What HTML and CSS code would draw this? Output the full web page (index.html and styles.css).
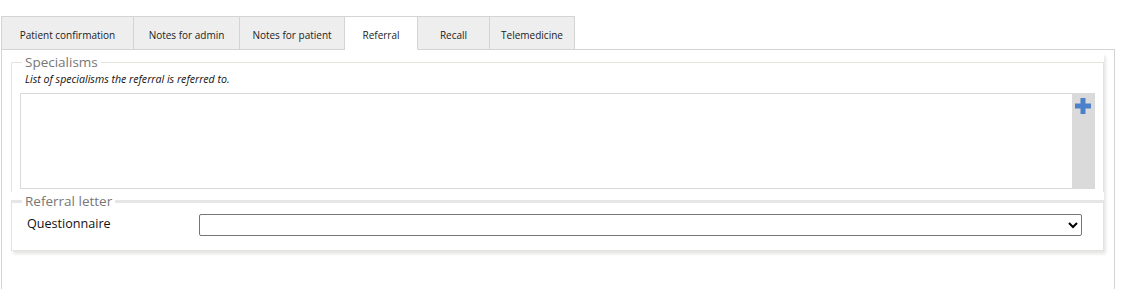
FILE: index.html
```html
<!DOCTYPE html>
<html lang="en">
<head>
  <meta charset="UTF-8">
  <title>Referral</title>
  <link rel="stylesheet" href="styles.css">
</head>
<body>
  <div class="tabs">
    <div class="tab t-confirm">Patient confirmation</div>
    <div class="tab t-admin">Notes for admin</div>
    <div class="tab t-patient">Notes for patient</div>
    <div class="tab t-referral active">Referral</div>
    <div class="tab t-recall">Recall</div>
    <div class="tab t-tele">Telemedicine</div>
  </div>

  <div class="panel">
    <div class="group">
      <fieldset class="sect sect-spec">
        <legend>Specialisms</legend>
        <p class="hint">List of specialisms the referral is referred to.</p>
        <div class="listbox">
          <div class="list-body"></div>
          <div class="list-side">
            <svg class="add-icon" width="16" height="16" viewBox="0 0 16 16">
              <rect x="5.5" y="0" width="5" height="16" fill="#4d80cb"/>
              <rect x="0" y="5.5" width="16" height="5" fill="#4d80cb"/>
            </svg>
          </div>
        </div>
      </fieldset>
      <fieldset class="sect sect-letter">
        <legend>Referral letter</legend>
        <div class="row">
          <label for="questionnaire">Questionnaire</label>
          <select id="questionnaire"><option></option></select>
        </div>
      </fieldset>
    </div>
  </div>
</body>
</html>
```

FILE: styles.css
```css
*, *::before, *::after { box-sizing: border-box; }
body { margin: 0; padding: 16px 0 0 1px; font-family: "Open Sans", Arial, sans-serif; background: #fff; color: #222; }

.tabs { display: flex; height: 34px; }
.tab { display: flex; align-items: center; justify-content: center; padding-top: 3px; background: #eeeeee; border: 1px solid #d4d4d4; border-left: none; font-size: 10px; color: #222; }
.tab:first-child { border-left: 1px solid #d4d4d4; }
.tab.active { background: #fff; border-bottom-color: #fff; position: relative; z-index: 1; }
.t-confirm { width: 133px; }
.t-admin { width: 106px; }
.t-patient { width: 105px; }
.t-referral { width: 73px; }
.t-recall { width: 72px; }
.t-tele { width: 85px; }

.panel { width: 1114px; min-height: 260px; margin-top: -1px; border: 1px solid #d4d4d4; padding: 3px 10px 0 9px; }

.group { box-shadow: 2px 3px 3px rgba(0,0,0,0.10); }
.sect { margin: 0; padding: 0 8px 3px; border: 1px solid #e4e4de; min-width: 0; }
.sect legend { margin-left: 2px; padding: 0 3px; font-size: 13.5px; color: #777; line-height: 18px; }
.sect-spec { border-bottom: none; }
.sect-letter { border-top: 3px solid #e6e6e6; padding-bottom: 14px; }

.hint { margin: 1px 0 7px 5px; font-size: 10.6px; font-style: italic; color: #111; line-height: 14px; }

.listbox { display: flex; height: 96px; border: 1px solid #d9d9d9; }
.list-body { flex: 1; background: #fff; }
.list-side { width: 22px; background: #dadada; display: flex; justify-content: center; padding-top: 4px; }

.row { display: flex; align-items: center; padding: 4px 13px 0 7px; }
.row label { width: 172px; font-size: 12.6px; color: #111; margin-top: -4px; }
.row select { flex: 1; height: 22px; border: 1px solid #767676; border-radius: 2px; background: #fff; font-family: inherit; font-size: 12px; }
```
